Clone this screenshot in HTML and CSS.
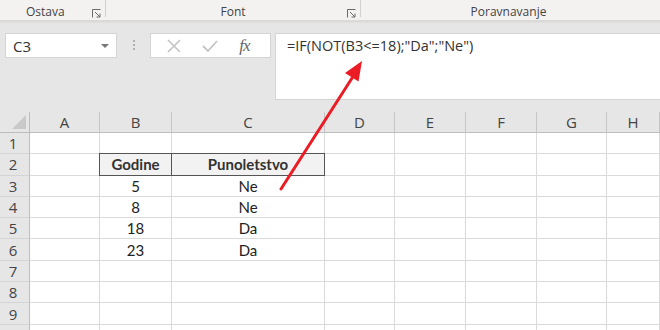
FILE: index.html
```
<!DOCTYPE html>
<html lang="bs">

<head>
    <meta charset="UTF-8">
    <title>Excel - NOT</title>
    <link rel="stylesheet" href="styles.css">
</head>

<body>
    <div class="app">
        <div class="ribbon">
            <div class="group group-clip">
                <span>Ostava</span>
                <svg class="launcher" width="9" height="9" viewBox="0 0 9 9"><path d="M0.5 0.5h8M0.5 0.5v8M3 3l5 5M8 4.5v3.5h-3.5" stroke="#6b6b6b" fill="none"/></svg>
            </div>
            <div class="group group-font">
                <span>Font</span>
                <svg class="launcher" width="9" height="9" viewBox="0 0 9 9"><path d="M0.5 0.5h8M0.5 0.5v8M3 3l5 5M8 4.5v3.5h-3.5" stroke="#6b6b6b" fill="none"/></svg>
            </div>
            <div class="group group-align">
                <span>Poravnavanje</span>
            </div>
        </div>

        <div class="formula-bar">
            <div class="name-box">
                <span>C3</span>
                <svg width="8" height="4" viewBox="0 0 8 4"><path d="M0 0h8L4 4z" fill="#777"/></svg>
            </div>
            <div class="grip"><i></i><i></i><i></i></div>
            <div class="fx-buttons">
                <svg width="14" height="14" viewBox="0 0 14 14"><path d="M1 1l12 12M13 1L1 13" stroke="#c3c3c3" stroke-width="1.6"/></svg>
                <svg width="16" height="14" viewBox="0 0 16 14"><path d="M1 7l5 5L15 2" stroke="#c3c3c3" stroke-width="1.8" fill="none"/></svg>
                <span class="fx">fx</span>
            </div>
            <div class="formula">=IF(NOT(B3&lt;=18);"Da";"Ne")</div>
        </div>

        <div class="sheet">
            <div class="corner"><svg width="14" height="14" viewBox="0 0 14 14"><path d="M14 0v14H0z" fill="#c9c9c9"/></svg></div>
            <div class="col-head">A</div>
            <div class="col-head">B</div>
            <div class="col-head">C</div>
            <div class="col-head">D</div>
            <div class="col-head">E</div>
            <div class="col-head">F</div>
            <div class="col-head">G</div>
            <div class="col-head">H</div>

            <div class="row-head">1</div>
            <div class="cell"></div><div class="cell"></div><div class="cell"></div><div class="cell"></div><div class="cell"></div><div class="cell"></div><div class="cell"></div><div class="cell"></div>

            <div class="row-head">2</div>
            <div class="cell"></div>
            <div class="cell th th-first">Godine</div>
            <div class="cell th">Punoletstvo</div>
            <div class="cell"></div><div class="cell"></div><div class="cell"></div><div class="cell"></div><div class="cell"></div>

            <div class="row-head">3</div>
            <div class="cell"></div><div class="cell">5</div><div class="cell">Ne</div><div class="cell"></div><div class="cell"></div><div class="cell"></div><div class="cell"></div><div class="cell"></div>

            <div class="row-head">4</div>
            <div class="cell"></div><div class="cell">8</div><div class="cell">Ne</div><div class="cell"></div><div class="cell"></div><div class="cell"></div><div class="cell"></div><div class="cell"></div>

            <div class="row-head">5</div>
            <div class="cell"></div><div class="cell">18</div><div class="cell">Da</div><div class="cell"></div><div class="cell"></div><div class="cell"></div><div class="cell"></div><div class="cell"></div>

            <div class="row-head">6</div>
            <div class="cell"></div><div class="cell">23</div><div class="cell">Da</div><div class="cell"></div><div class="cell"></div><div class="cell"></div><div class="cell"></div><div class="cell"></div>

            <div class="row-head">7</div>
            <div class="cell"></div><div class="cell"></div><div class="cell"></div><div class="cell"></div><div class="cell"></div><div class="cell"></div><div class="cell"></div><div class="cell"></div>

            <div class="row-head">8</div>
            <div class="cell"></div><div class="cell"></div><div class="cell"></div><div class="cell"></div><div class="cell"></div><div class="cell"></div><div class="cell"></div><div class="cell"></div>

            <div class="row-head">9</div>
            <div class="cell"></div><div class="cell"></div><div class="cell"></div><div class="cell"></div><div class="cell"></div><div class="cell"></div><div class="cell"></div><div class="cell"></div>

            <div class="row-head"></div>
            <div class="cell"></div><div class="cell"></div><div class="cell"></div><div class="cell"></div><div class="cell"></div><div class="cell"></div><div class="cell"></div><div class="cell"></div>
        </div>

        <!-- red annotation arrow over the sheet -->
        <svg class="arrow" width="660" height="330" viewBox="0 0 660 330">
            <line x1="281" y1="189" x2="354" y2="75" stroke="#ec1c24" stroke-width="3" stroke-linecap="round"/>
            <path d="M362 61L358.5 81.5L345 73z" fill="#ec1c24"/>
        </svg>
    </div>
</body>

</html>
```

FILE: styles.css
```
* {
    box-sizing: border-box;
}

body {
    margin: 0;
    background: #e6e6e6;
    font-family: "Open Sans", "Noto Sans", sans-serif;
}

.app {
    position: relative;
    width: 660px;
    height: 330px;
    overflow: hidden;
}

/* ribbon group labels */
.ribbon {
    display: flex;
    height: 21px;
    background: #f3f2f1;
    border-bottom: 1px solid #d9d9d9;
    box-shadow: 0 1px 2px rgba(0, 0, 0, 0.08);
    font-size: 12px;
    color: #444;
}

.group {
    position: relative;
    display: flex;
    justify-content: center;
    align-items: flex-end;
    height: 17px;
    border-right: 1px solid #d0d0d0;
    line-height: 16px;
}

.group span {
    margin-bottom: -3px;
}

.group-clip {
    flex: 0 0 106px;
    justify-content: flex-start;
    padding-left: 26px;
}

.group-font {
    flex: 0 0 255px;
}

.group-align {
    flex: 1;
    border-right: none;
    padding-right: 4px;
}

.launcher {
    position: absolute;
    right: 4px;
    top: 9px;
}

/* formula bar */
.formula-bar {
    display: flex;
    align-items: flex-start;
    height: 91px;
    padding-top: 12px;
}

.name-box {
    display: flex;
    align-items: center;
    justify-content: space-between;
    width: 112px;
    height: 25px;
    margin-left: 5px;
    padding: 0 7px 0 7px;
    background: #fff;
    border: 1px solid #d4d4d4;
    font-size: 15px;
    color: #333;
}

.grip {
    display: flex;
    flex-direction: column;
    gap: 2px;
    width: 33px;
    align-items: center;
    padding-top: 7px;
}

.grip i {
    width: 2px;
    height: 2px;
    background: #b0b0b0;
}

.fx-buttons {
    display: flex;
    align-items: center;
    justify-content: space-around;
    width: 121px;
    height: 25px;
    padding: 0 10px 0 6px;
    background: #fff;
    border: 1px solid #d4d4d4;
}

.fx {
    font-family: "Liberation Serif", serif;
    font-style: italic;
    font-size: 17px;
    color: #666;
    letter-spacing: -1px;
}

.formula {
    flex: 1;
    height: 67px;
    margin-left: 4px;
    padding: 2px 0 0 11px;
    background: #fff;
    border: 1px solid #d4d4d4;
    border-right: none;
    font-size: 14.5px;
    color: #333;
}

/* worksheet grid */
.sheet {
    display: grid;
    grid-template-columns: 30px 70px 72px 153px 70px 71px 71px 70px 53px;
    grid-template-rows: 21px;
    grid-auto-rows: 21.3px;
    background: #fff;
}

.corner,
.col-head,
.row-head {
    background: #e6e6e6;
    color: #444;
    font-size: 15px;
}

.corner {
    display: flex;
    align-items: flex-end;
    justify-content: flex-end;
    padding: 0 3px 3px 0;
    border-right: 1px solid #bdbdbd;
    border-bottom: 1px solid #bdbdbd;
}

.col-head {
    display: flex;
    align-items: center;
    justify-content: center;
    border-right: 1px solid #c6c6c6;
    border-bottom: 1px solid #bdbdbd;
}

.row-head {
    display: flex;
    align-items: center;
    justify-content: center;
    padding-right: 3px;
    border-right: 1px solid #bdbdbd;
    border-bottom: 1px solid #d4d4d4;
}

.cell {
    display: flex;
    align-items: center;
    justify-content: center;
    border-right: 1px solid #dadada;
    border-bottom: 1px solid #dadada;
    font-family: "Lato", "Open Sans", sans-serif;
    font-size: 15px;
    color: #222;
}

.th {
    font-weight: bold;
    color: #333;
    background: #f2f2f2;
    border-right: 1px solid #555;
    border-bottom: 1px solid #555;
    margin-top: -1px;
    border-top: 1px solid #555;
}

.th-first {
    border-left: 1px solid #555;
    margin-left: -1px;
}

.arrow {
    position: absolute;
    top: 0;
    left: 0;
    pointer-events: none;
}
```
